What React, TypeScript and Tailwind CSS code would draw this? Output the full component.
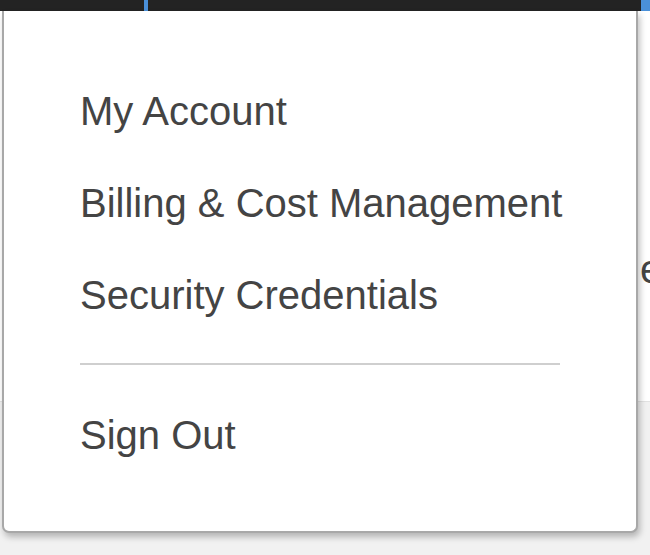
import React from "react";

const items = ["My Account", "Billing & Cost Management", "Security Credentials"];

const App = () => {
  return (
    <div
      className="relative w-[650px] h-[555px] overflow-hidden bg-white"
      style={{ fontFamily: '"Liberation Sans", Arial, sans-serif' }}
    >
      {/* top nav strip */}
      <div className="flex h-[11px] bg-[#232323]">
        <div className="w-[144px]" />
        <div className="w-[4px] bg-[#4a90d9]" />
        <div className="flex-1" />
        <div className="w-[9px] bg-[#4a90d9]" />
      </div>

      {/* page behind the menu */}
      <div className="flex flex-col h-[544px]">
        <div className="flex justify-end h-[390px]">
          <div className="w-[10px] pt-[238px] text-[40px] leading-none text-[#444]">e</div>
        </div>
        <div className="flex-1 bg-[#f1f1f1] border-t border-[#e2e2e2]" />
      </div>

      {/* dropdown menu */}
      <div className="absolute left-[2px] top-[11px] w-[636px] h-[522px] bg-white border-[2px] border-t-0 border-[#a8a8a8] rounded-b-[7px] shadow-[2px_4px_6px_rgba(0,0,0,0.25)] pt-[54px] pl-[76px] pr-[76px]">
        {items.map((item) => (
          <div key={item} className="text-[40px] leading-[92px] text-[#444] whitespace-nowrap">
            {item}
          </div>
        ))}
        <div className="mt-[22px] h-[2px] bg-[#cfcfcf]" />
        <div className="mt-[24px] text-[40px] leading-[92px] text-[#444]">Sign Out</div>
      </div>
    </div>
  );
};

export default App;
